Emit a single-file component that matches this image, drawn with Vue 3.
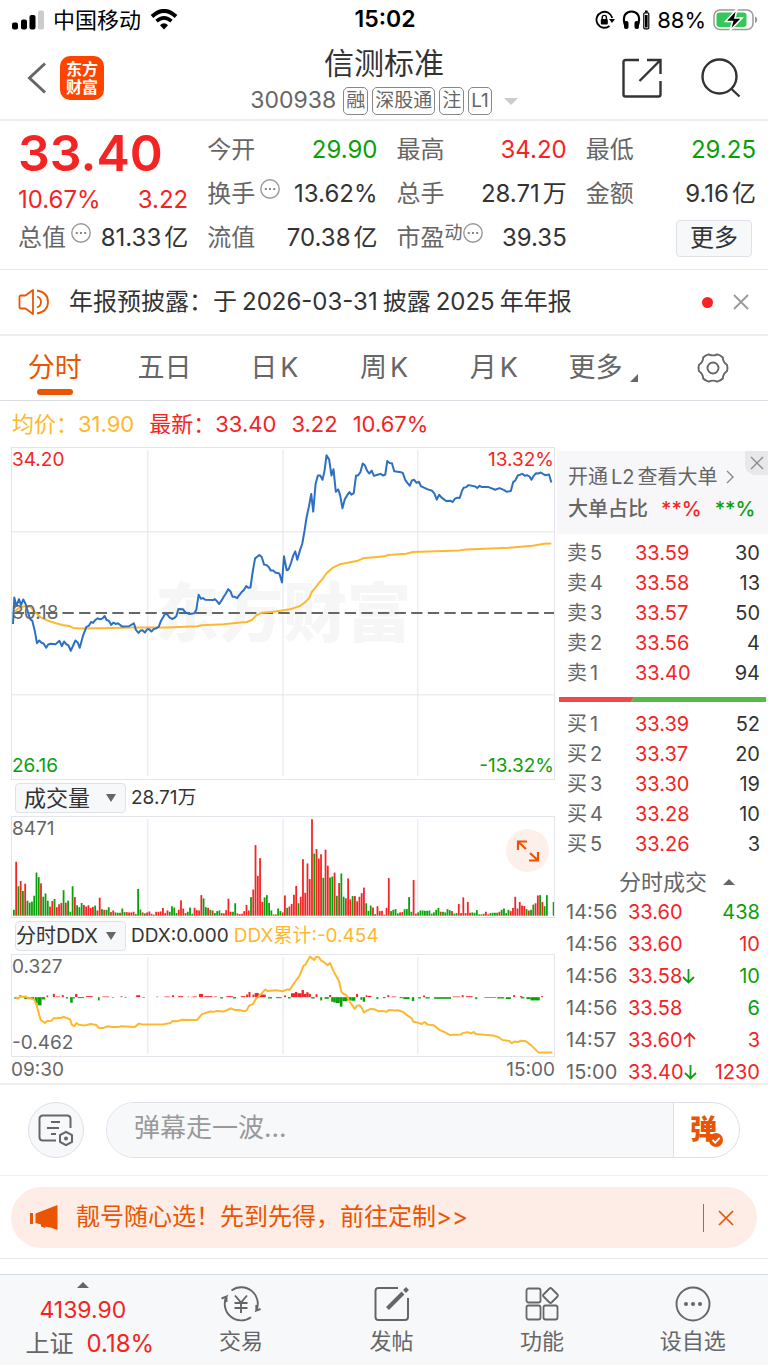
<script setup>
import { ref, computed } from 'vue'

const tabs = ['分时', '五日', '日K', '周K', '月K', '更多']
const activeTab = ref('分时')
const message = ref('')
const volumeIndex = ref('成交量')
const ddxIndex = ref('分时DDX')

const quoteColumns = [
  [
    { label: '今开', value: '29.90', tone: 'down' },
    { label: '换手', value: '13.62%', hint: true },
    { label: '流值', value: '70.38', unit: '亿' },
  ],
  [
    { label: '最高', value: '34.20', tone: 'up' },
    { label: '总手', value: '28.71', unit: '万' },
    { label: '市盈', sup: '动', value: '39.35', hint: true },
  ],
  [
    { label: '最低', value: '29.25', tone: 'down' },
    { label: '金额', value: '9.16', unit: '亿' },
  ],
]

const sells = [
  { side: '卖', level: 5, price: '33.59', volume: 30 },
  { side: '卖', level: 4, price: '33.58', volume: 13 },
  { side: '卖', level: 3, price: '33.57', volume: 50 },
  { side: '卖', level: 2, price: '33.56', volume: 4 },
  { side: '卖', level: 1, price: '33.40', volume: 94 },
]
const buys = [
  { side: '买', level: 1, price: '33.39', volume: 52 },
  { side: '买', level: 2, price: '33.37', volume: 20 },
  { side: '买', level: 3, price: '33.30', volume: 19 },
  { side: '买', level: 4, price: '33.28', volume: 10 },
  { side: '买', level: 5, price: '33.26', volume: 3 },
]
const ticks = [
  { time: '14:56', price: '33.60', arrow: '', volume: 438, tone: 'down' },
  { time: '14:56', price: '33.60', arrow: '', volume: 10, tone: 'up' },
  { time: '14:56', price: '33.58', arrow: 'down', volume: 10, tone: 'down' },
  { time: '14:56', price: '33.58', arrow: '', volume: 6, tone: 'down' },
  { time: '14:57', price: '33.60', arrow: 'up', volume: 3, tone: 'up' },
  { time: '15:00', price: '33.40', arrow: 'down', volume: 1230, tone: 'up' },
]

const priceLine =
  '36,672 40,592 46,618 54,597 60,615 67,598 74,612 82,640 88,658 94,662 102,695 108,730 115,722 122,729 128,731 136,744 142,734 150,732 164,733 176,723 183,739 190,725 196,733 203,737 210,753 224,722 231,728 237,744 247,707 257,681 264,678 271,666 277,669 284,660 291,655 298,658 305,656 312,648 318,660 325,663 332,675 338,668 345,672 352,670 365,680 385,679 400,670 406,690 414,699 420,692 426,691 433,698 440,688 446,688 453,695 460,687 468,685 475,680 481,664 488,652 494,641 500,643 508,653 515,657 522,654 528,648 534,627 548,628 555,637 568,642 582,640 588,629 595,584 602,596 608,594 615,599 640,600 643,597 650,603 657,612 664,601 671,589 677,580 684,567 691,574 697,590 704,590 711,594 718,584 725,575 731,570 738,558 745,563 751,562 758,513 765,474 778,464 785,470 792,493 799,494 806,500 812,511 819,511 826,517 838,520 846,547 852,468 860,510 866,507 873,488 880,465 886,453 892,478 900,450 907,430 914,390 920,350 927,318 934,280 940,333 947,250 954,224 961,224 968,237 974,210 980,163 988,176 995,224 1001,205 1008,273 1015,266 1021,283 1028,323 1035,296 1042,284 1049,274 1055,282 1062,277 1069,224 1075,224 1082,214 1089,188 1096,194 1102,209 1109,218 1116,209 1123,225 1136,221 1143,219 1150,224 1157,221 1163,180 1170,186 1177,187 1184,211 1204,214 1210,217 1217,237 1224,247 1231,255 1237,239 1244,237 1251,246 1258,243 1265,257 1285,266 1298,270 1305,279 1312,297 1319,282 1326,290 1340,301 1353,300 1360,304 1367,294 1374,291 1381,292 1388,270 1393,261 1401,259 1408,253 1428,257 1434,262 1441,255 1448,259 1468,259 1488,267 1501,262 1515,268 1522,273 1535,271 1542,244 1549,238 1556,224 1570,219 1577,225 1584,223 1591,227 1597,237 1604,225 1611,217 1618,218 1625,215 1638,223 1650,221 1657,245'
const averageLine =
  '36,640 48,628 60,620 80,618 90,622 105,640 120,652 140,662 165,670 185,675 205,678 217,684 240,686 300,685 400,683 500,683 590,679 605,676 670,673 720,668 740,666 755,660 768,647 785,638 820,635 870,628 900,618 915,607 928,594 935,577 960,545 970,534 980,519 998,503 1020,492 1075,481 1090,474 1155,468 1165,464 1220,460 1240,455 1380,450 1400,447 1530,442 1600,436 1635,430 1657,429'
const ddxLine =
  '43,652 52,655 58,649 66,650 76,649 80,654 88,654 95,657 101,660 107,675 113,698 119,720 132,730 139,724 152,723 159,715 166,716 173,714 180,715 187,711 195,714 203,717 208,719 213,735 220,740 227,730 234,735 250,738 270,733 287,736 294,745 308,745 322,740 335,742 355,742 362,740 403,742 415,732 430,735 490,734 510,730 517,724 530,725 545,720 590,721 605,703 630,695 640,696 650,693 670,695 693,685 703,690 715,690 735,694 740,690 748,676 758,673 768,655 775,650 795,628 802,632 828,630 848,633 862,627 869,629 880,612 890,597 897,589 903,575 910,556 917,551 930,527 943,537 950,527 957,529 964,539 970,542 983,553 991,547 1000,569 1018,603 1025,635 1032,641 1040,645 1050,665 1065,687 1072,677 1080,676 1087,685 1093,698 1100,693 1113,687 1125,688 1135,694 1150,693 1160,696 1168,690 1185,692 1195,691 1210,696 1225,708 1235,714 1242,726 1255,729 1267,733 1275,727 1285,735 1303,737 1320,751 1337,759 1352,767 1385,765 1390,761 1405,758 1415,762 1423,758 1430,764 1480,768 1497,773 1510,782 1530,785 1538,792 1545,787 1558,788 1565,784 1580,786 1595,797 1618,820 1660,820'

// one bar per minute, negative numbers are falling minutes
const morning = [
  -18, 165, -90, 106, -76, 98, -46, -40, -43, -61, -132, -118, 99, -58, -68, -46, 28, 45, -51, 26,
  35, 39, -78, 40, -46, -12, -90, 57, -32, -26, -39, 33, 28, 32, 24, 27, -31, 16, 55, -20,
  18, -18, -26, 11, 16, -10, -9, 9, -22, -11, 11, 10, 10, 12, -5, -82, -19, 10, -7, 10,
  13, 6, -3, 12, 12, 13, 24, 8, 16, -12, -29, -25, -8, 18, 47, 22, 8, -12, -25, -6,
  24, 17, 16, 63, -53, -26, 24, -18, 16, -8, -14, -16, 8, 7, 17, 52, 12, -12, -38, 7,
  5, 6, 14, 33, 16, -57, 80, 216, 122, 176, 42, -56, -63, -39, -16, 4, -4, -22, -14, 10,
]
const afternoon = [
  62, -24, 28, 36, 64, 91, -38, 58, 173, 70, 160, 112, 295, -190, 204, 175, 188, -116, 202, 153,
  -117, -120, 132, -61, 100, -129, -58, 53, 114, 50, -60, 60, 44, 58, 69, 86, -38, -15, -31, 25,
  -5, 29, 14, 15, -3, 24, 115, -14, -18, -20, -7, 10, 11, -20, -20, -57, -12, 109, 6, -10,
  -16, -16, -15, -15, -16, -6, -10, -18, -24, 12, -12, -10, -20, -17, 14, -6, -8, 36, 8, 56,
  8, 42, 9, -10, -9, -17, -4, -4, 6, 12, 4, -8, -9, -9, -9, 12, -18, -22, -8, -18,
  14, 24, 58, 22, 42, 31, 30, -20, 16, -18, -34, 38, 62, -63, 42, -29, -63, 0, 0, -42,
]

const volumeBars = computed(() => {
  const build = (list, start) => list.map((v, i) => ({
    x: start + i * 6.8,
    height: Math.abs(v),
    tone: v > 0 ? 'up' : 'down',
  }))
  return [...build(morning, 36), ...build(afternoon, 852)]
})

// [start, end, height]
const ddxBars = [
  [40, 52, -5], [55, 61, 6], [61, 70, 2], [70, 100, -6], [102, 110, -18], [110, 122, -25], [122, 133, -7],
  [137, 142, 5], [156, 162, 10], [165, 178, 2], [183, 189, 6], [195, 202, -4], [208, 216, -17],
  [216, 222, -4], [223, 230, 10], [232, 250, -3], [256, 276, 3], [292, 297, -10], [305, 325, 2],
  [335, 340, -2], [360, 365, 3], [372, 378, -2], [407, 419, 6], [426, 433, -2], [468, 473, 2],
  [492, 508, 2], [515, 521, 6], [533, 548, 3], [562, 566, 2], [576, 590, 2], [596, 608, 10],
  [612, 636, 3], [642, 650, 2], [660, 668, -4], [678, 698, 3], [698, 708, -4], [722, 736, 3],
  [738, 744, 8], [745, 751, 16], [757, 763, 8], [764, 776, 13], [777, 797, 8], [804, 816, -4], [828, 845, -3],
  [852, 858, 5], [864, 872, -4], [873, 885, 12], [885, 892, 16], [892, 905, 12], [905, 912, 22],
  [912, 919, 10], [919, 926, 15], [926, 933, 10], [934, 945, -4], [947, 953, 9], [961, 967, -10],
  [974, 987, -5], [988, 994, 7], [994, 1000, -14], [1000, 1008, -16], [1008, 1020, -18], [1020, 1028, -29],
  [1028, 1042, -12], [1042, 1055, -10], [1055, 1067, -11], [1069, 1075, 10], [1082, 1088, -8],
  [1089, 1096, -14], [1098, 1103, 6], [1104, 1115, 4], [1130, 1136, -6], [1150, 1158, -3], [1163, 1169, 6],
  [1176, 1190, 2], [1200, 1210, -3], [1211, 1230, -6], [1237, 1244, -12], [1256, 1264, -4],
  [1271, 1277, 5], [1278, 1291, -4], [1304, 1355, -5], [1360, 1382, 2], [1387, 1393, 6], [1400, 1420, 3],
  [1428, 1434, -6], [1455, 1490, -2], [1494, 1515, -4], [1520, 1535, -6], [1542, 1548, 6],
  [1562, 1570, 3], [1565, 1576, -4], [1582, 1594, -6], [1594, 1622, -10], [1626, 1632, 3],
]
</script>

<template>
  <div class="app">
    <div class="status">
      <div class="status-side">
        <svg class="signal" viewBox="0 0 32 20" aria-hidden="true">
          <rect x="0" y="12.500" width="6" height="7" rx="2" />
          <rect x="9" y="9.500" width="6" height="10" rx="2" />
          <rect x="17.500" y="5" width="6" height="14.500" rx="2" />
          <rect x="26" y="0.500" width="6" height="19" rx="2" fill="#ccc" />
        </svg>
        <span>中国移动</span>
        <svg class="wifi" viewBox="0 0 28 21" aria-hidden="true">
          <path d="M2 7.500Q14-3.500 26 7.500" fill="none" stroke="#000" stroke-width="4" />
          <path d="M6.500 12.200Q14 5.500 21.500 12.200" fill="none" stroke="#000" stroke-width="3.600" />
          <path d="M10 16.300Q14 12.300 18 16.300L14 20.500Z" />
        </svg>
      </div>
      <strong class="clock">15:02</strong>
      <div class="status-side right">
        <svg class="lock" viewBox="0 0 20 20" aria-hidden="true">
          <path d="M14.500 16A8 8 0 1 1 17.300 8" fill="none" stroke="#000" stroke-width="1.800" />
          <path d="M14 9H20L17 13Z" />
          <rect x="5.800" y="9" width="7" height="5.500" rx="1" />
          <path d="M7.200 9V7.500a2.100 2.100 0 0 1 4.200 0V9" fill="none" stroke="#000" stroke-width="1.400" />
        </svg>
        <svg class="headphone" viewBox="0 0 28 20" aria-hidden="true">
          <path d="M3.500 16.500C-1 5 5 1.500 9.500 1.500S20 5 15.500 16.500" fill="none" stroke="#000" stroke-width="2.200" />
          <rect x="2" y="11" width="4.500" height="8" rx="2" />
          <rect x="12.500" y="11" width="4.500" height="8" rx="2" />
          <rect x="21.800" y="2.800" width="5" height="16" rx="1" fill="none" stroke="#000" stroke-width="1.200" />
          <rect x="23" y="5" width="2.600" height="12.500" />
          <rect x="23" y="0.500" width="2.600" height="2" />
        </svg>
        <span>88%</span>
        <svg class="battery" viewBox="0 0 45 22" aria-hidden="true">
          <rect x="1" y="1" width="39" height="19.500" rx="6" fill="none" stroke="#999" stroke-width="1.500" />
          <rect x="3.500" y="3.500" width="30" height="14.500" rx="3" fill="#35c759" />
          <path d="M42 7.500c3 1 3 5.500 0 6.500Z" fill="#999" />
          <path d="M24 0L12.500 12.500H19.500L17 21.500L29 9H22Z" stroke="#fff" stroke-width="1.600" />
        </svg>
      </div>
    </div>

    <header class="header">
      <div class="header-left">
        <button class="plain" aria-label="返回">
          <svg class="back" viewBox="0 0 20 32"><path d="M18 1.500L2.500 16L18 30.500" fill="none" stroke="#666" stroke-width="3" /></svg>
        </button>
        <a href="#" class="brand">东方<br />财富</a>
      </div>
      <div class="header-mid">
        <h1>信测标准</h1>
        <div class="code-row">
          <span class="code">300938</span>
          <span class="tag">融</span>
          <span class="tag">深股通</span>
          <span class="tag">注</span>
          <span class="tag">L1</span>
          <i class="caret"></i>
        </div>
      </div>
      <div class="header-right">
        <button class="plain" aria-label="分享">
          <svg class="share" viewBox="0 0 40 40" fill="none" stroke="#333" stroke-width="2.400">
            <path d="M17 2H3.500Q1.500 2 1.500 4V36.500Q1.500 38.500 3.500 38.500H36.500Q38.500 38.500 38.500 36.500V23" />
            <path d="M25 2H38.500V16M38 2.500L17.500 23" />
          </svg>
        </button>
        <button class="plain" aria-label="搜索">
          <svg class="search" viewBox="0 0 40 40" fill="none" stroke="#333" stroke-width="2.400">
            <circle cx="18.500" cy="18.500" r="17" /><path d="M30 30.500L38.500 38.500" />
          </svg>
        </button>
      </div>
    </header>

    <section class="quote">
      <div class="quote-main">
        <div class="last">33.40</div>
        <div class="pair up"><span>10.67%</span><span>3.22</span></div>
        <div class="pair">
          <span class="label">总值
            <svg class="hint" viewBox="0 0 20 20"><circle cx="10" cy="10" r="9.200" fill="none" stroke="#999" stroke-width="1.400" /><path d="M4.800 10h2M9 10h2M13.200 10h2" stroke="#888" stroke-width="2" /></svg>
          </span>
          <span class="with-unit">81.33<em>亿</em></span>
        </div>
      </div>
      <div v-for="(column, i) in quoteColumns" :key="i" class="quote-col">
        <div v-for="item in column" :key="item.label" class="pair">
          <span class="label">{{ item.label }}<sup v-if="item.sup">{{ item.sup }}</sup>
            <svg v-if="item.hint" class="hint" viewBox="0 0 20 20"><circle cx="10" cy="10" r="9.200" fill="none" stroke="#999" stroke-width="1.400" /><path d="M4.800 10h2M9 10h2M13.200 10h2" stroke="#888" stroke-width="2" /></svg>
          </span>
          <span class="with-unit" :class="item.tone">{{ item.value }}<em v-if="item.unit">{{ item.unit }}</em></span>
        </div>
        <div v-if="column.length < 3" class="pair more-cell"><button class="more">更多</button></div>
      </div>
    </section>

    <section class="notice">
      <svg class="speaker" viewBox="0 0 32 28" fill="none" stroke="#ea5504" stroke-width="1.800">
        <path d="M15 2V26L7.500 20.500H3Q1.500 20.500 1.500 19V9Q1.500 7.500 3 7.500H7.500Z" stroke-linejoin="round" />
        <path d="M19 8.500Q23 10 23 14T19 19.500M19 2.500Q30 4.500 30 14T19 25.500" />
      </svg>
      <a href="#">年报预披露：于<b>2026-03-31</b>披露<b>2025</b>年年报</a>
      <i class="dot"></i>
      <button class="plain" aria-label="关闭">
        <svg class="close-sm" viewBox="0 0 16 16"><path d="M1 1L15 15M15 1L1 15" stroke="#999" stroke-width="1.800" /></svg>
      </button>
    </section>

    <nav class="tabs">
      <button v-for="tab in tabs" :key="tab" class="tab" :class="{ active: tab === activeTab }" @click="activeTab = tab">
        {{ tab.replace('K', '') }}<b v-if="tab.endsWith('K')">K</b><i v-if="tab === '更多'" class="corner"></i>
      </button>
      <button class="tab" aria-label="设置">
        <svg class="gear" viewBox="0 0 32 32" fill="none" stroke="#666" stroke-width="1.900">
          <path d="M29.900 12.800Q31 16 29.900 19.200Q26 21.800 25.800 26.500Q23.500 28.900 20.200 29.700Q16 27.500 11.800 29.700Q8.500 28.900 6.200 26.500Q6 21.800 2.100 19.200Q1 16 2.100 12.800Q6 10.200 6.200 5.500Q8.500 3.100 11.800 2.300Q16 4.500 20.200 2.300Q23.500 3.100 25.800 5.500Q26 10.200 29.900 12.800Z" />
          <circle cx="16" cy="16" r="5.500" />
        </svg>
      </button>
    </nav>

    <div class="legend">
      <span class="avg">均价：31.90</span>
      <span class="up">最新：33.40</span>
      <span class="up">3.22</span>
      <span class="up">10.67%</span>
    </div>

    <main class="board">
      <div class="charts">
        <div class="panel price-panel">
          <span class="watermark">东方财富</span>
          <svg viewBox="33 141 1632 999" preserveAspectRatio="none">
            <path class="grid" d="M442 147V1132M849 147V1132M1255 147V1132M33 394H1665M33 886H1665" />
            <path class="base" d="M35 639H1665" />
            <polyline class="line gold" :points="averageLine" />
            <polyline class="line blue" :points="priceLine" />
          </svg>
          <span class="mark at-top at-left up">34.20</span>
          <span class="mark at-top at-right up">13.32%</span>
          <span class="mark at-mid at-left">30.18</span>
          <span class="mark at-bottom at-left down">26.16</span>
          <span class="mark at-bottom at-right down">-13.32%</span>
        </div>

        <div class="panel-head">
          <label class="picker">
            <select v-model="volumeIndex" aria-label="成交量指标"><option>成交量</option></select>
          </label>
          <span>28.71万</span>
        </div>
        <div class="panel volume-panel">
          <svg viewBox="33 108 1632 306" preserveAspectRatio="none">
            <path class="grid" d="M442 114V411M849 114V411M1255 114V411" />
            <rect v-for="(bar, i) in volumeBars" :key="i" :class="bar.tone" :x="bar.x" :y="410 - bar.height" width="5.400" :height="bar.height" />
          </svg>
          <span class="mark at-top at-left">8471</span>
          <button class="expand" aria-label="全屏">
            <svg viewBox="0 0 24 24" fill="none" stroke="#ea5504" stroke-width="2.200">
              <path d="M2 11V2.500H11M2.500 3L10 10M22 13V21.500H13M21.500 21L14 14" />
            </svg>
          </button>
        </div>

        <div class="panel-head">
          <label class="picker tight">
            <select v-model="ddxIndex" aria-label="资金指标"><option>分时DDX</option></select>
          </label>
          <span>DDX:0.000</span>
          <span class="avg">DDX累计:-0.454</span>
        </div>
        <div class="panel ddx-panel">
          <svg viewBox="33 522 1632 309" preserveAspectRatio="none">
            <path class="grid" d="M442 528V825M849 528V825M1255 528V825" />
            <rect v-for="(bar, i) in ddxBars" :key="i" :class="bar[2] > 0 ? 'up' : 'down'" :x="bar[0]" :y="bar[2] > 0 ? 651 - bar[2] : 651" :width="bar[1] - bar[0]" :height="Math.abs(bar[2])" />
            <polyline class="line gold" :points="ddxLine" />
          </svg>
          <span class="mark at-top at-left">0.327</span>
          <span class="mark at-bottom at-left">-0.462</span>
        </div>
        <div class="axis"><span>09:30</span><span>15:00</span></div>
      </div>

      <aside class="book">
        <div class="promo">
          <a href="#">开通<b>L2</b>查看大单<svg class="chevron" viewBox="0 0 8 14"><path d="M1 1L7 7L1 13" fill="none" stroke="#888" stroke-width="1.400" /></svg></a>
          <div class="ratio"><strong>大单占比</strong><span class="up">**%</span><span class="down">**%</span></div>
          <button class="promo-close" aria-label="关闭">
            <svg viewBox="0 0 14 14"><path d="M1 1L13 13M13 1L1 13" stroke="#888" stroke-width="1.300" /></svg>
          </button>
        </div>
        <table class="levels">
          <tbody>
            <tr v-for="row in sells" :key="row.level">
              <th scope="row">{{ row.side }}<b>{{ row.level }}</b></th>
              <td class="up">{{ row.price }}</td>
              <td class="amount">{{ row.volume }}</td>
            </tr>
          </tbody>
        </table>
        <svg class="balance" viewBox="0 0 207 5" preserveAspectRatio="none">
          <path d="M0 0H75L72 5H0Z" fill="#ee4a4a" /><path d="M75 0H207V5H72Z" fill="#57b946" />
        </svg>
        <table class="levels">
          <tbody>
            <tr v-for="row in buys" :key="row.level">
              <th scope="row">{{ row.side }}<b>{{ row.level }}</b></th>
              <td class="up">{{ row.price }}</td>
              <td class="amount">{{ row.volume }}</td>
            </tr>
          </tbody>
        </table>
        <button class="tick-title">分时成交<i class="caret-up"></i></button>
        <table class="ticks">
          <tbody>
            <tr v-for="(tick, i) in ticks" :key="i">
              <td class="time">{{ tick.time }}</td>
              <td class="up">
                <span class="tick-price">{{ tick.price }}<svg v-if="tick.arrow" class="arrow" :class="tick.arrow" viewBox="0 0 13 16" fill="none" stroke-width="1.800">
                  <path v-if="tick.arrow === 'down'" d="M6.500 1V14.500M1 9L6.500 14.500L12 9" />
                  <path v-else d="M6.500 15V1.500M1 7L6.500 1.500L12 7" />
                </svg></span>
              </td>
              <td class="amount" :class="tick.tone">{{ tick.volume }}</td>
            </tr>
          </tbody>
        </table>
      </aside>
    </main>

    <section class="comment">
      <button class="round" aria-label="弹幕设置">
        <svg viewBox="0 0 36 32" fill="none" stroke="#666" stroke-width="2">
          <path d="M32.500 14V5Q32.500 1.500 29 1.500H5Q1.500 1.500 1.500 5V23Q1.500 26.500 5 26.500H18" />
          <path d="M13 8H22M9 14H21M13 20H18" />
          <path d="M28 17.800L34 21.200V27.800L28 31.200L22 27.800V21.200Z" />
          <circle cx="28" cy="24.500" r="1" />
        </svg>
      </button>
      <div class="comment-box">
        <input v-model="message" type="text" placeholder="弹幕走一波..." aria-label="弹幕" />
        <button class="toggle" aria-label="弹幕开关">
          <span>弹</span>
          <svg viewBox="0 0 14 14"><circle cx="7" cy="7" r="7" fill="#ea5504" /><path d="M3.500 7L6.200 9.600L10.700 4.800" fill="none" stroke="#fff" stroke-width="1.800" /></svg>
        </button>
      </div>
    </section>

    <section class="promotion">
      <div class="pill">
        <svg class="horn" viewBox="0 0 28 25" fill="#ea5504">
          <path d="M0 8H3V19H0ZM5.500 8.500L27.500 0V25L20.500 22.500L19 22.500L15.500 21.500V23L11 21.500V19.500L5.500 18Z" />
        </svg>
        <a href="#">靓号随心选！先到先得，前往定制&gt;&gt;</a>
        <button class="plain" aria-label="关闭">
          <svg class="close-md" viewBox="0 0 16 16"><path d="M1 1L15 15M15 1L1 15" stroke="#ea5504" stroke-width="1.700" /></svg>
        </button>
      </div>
    </section>

    <nav class="toolbar">
      <a href="#" class="index">
        <i class="caret-up"></i>
        <span class="up">4139.90</span>
        <span class="index-row">上证<b class="up">0.18%</b></span>
      </a>
      <a href="#" class="item">
        <svg viewBox="0 0 40 36" fill="none" stroke="#666" stroke-width="1.900">
          <path d="M10.500 4.400A16.500 16.500 0 0 1 35.300 24.500L39.500 23M35.300 24.500V19M0.500 12.500L5.500 10.500A16.500 16.500 0 0 0 30 31.200M5.500 10.500V16" />
          <path d="M14 9.500L20 16.500L26 9.500M20 16.500V27M13.500 17H26.500M13.500 22H26.500" />
        </svg>
        交易
      </a>
      <a href="#" class="item">
        <svg viewBox="0 0 40 36" fill="none" stroke="#666" stroke-width="2">
          <path d="M26 2H6.500Q3.500 2 3.500 5V31Q3.500 34 6.500 34H33Q36 34 36 31V12" />
          <path d="M15.500 22.500L31 7" stroke-width="4" /><path d="M32.500 5.500L35.500 2.500" stroke-width="4" />
        </svg>
        发帖
      </a>
      <a href="#" class="item">
        <svg viewBox="0 0 40 36" fill="none" stroke="#666" stroke-width="1.800">
          <rect x="4.500" y="2.500" width="14" height="14" rx="2" /><rect x="4.500" y="19.500" width="14" height="14" rx="2" />
          <rect x="21.500" y="19.500" width="14" height="14" rx="2" />
          <path d="M27.500 2.500L21.500 8.500Q20.500 9.500 21.500 10.500L27.500 16.500Q28.500 17.500 29.500 16.500L35.500 10.500Q36.500 9.500 35.500 8.500L29.500 2.500Q28.500 1.500 27.500 2.500Z" />
        </svg>
        功能
      </a>
      <a href="#" class="item">
        <svg viewBox="0 0 40 36" fill="none" stroke="#666" stroke-width="1.900">
          <circle cx="20" cy="18" r="16.500" />
          <g fill="#666" stroke="none"><circle cx="13" cy="18" r="2" /><circle cx="20" cy="18" r="2" /><circle cx="27" cy="18" r="2" /></g>
        </svg>
        设自选
      </a>
    </nav>
  </div>
</template>

<style>
body {
  margin: 0;
  background: #fff;
}
</style>

<style scoped>
.app {
  font-family: Inter, 'Noto Sans CJK SC', sans-serif;
  font-size: 24px;
  line-height: 1.2;
  color: #333;
  background: #fff;
}

.app * {
  box-sizing: border-box;
}

svg {
  display: block;
  flex: none;
}

button,
input,
select {
  font: inherit;
  color: inherit;
  border: 0;
  padding: 0;
  margin: 0;
  background: none;
}

a {
  color: inherit;
  text-decoration: none;
}

b {
  font-weight: 400;
  margin: 0 3px;
}

em,
i {
  font-style: normal;
}

.plain {
  display: flex;
}

.up {
  color: #f52424;
  fill: #f52424;
}

.down {
  color: #0aa00a;
  fill: #0aa00a;
}

.avg {
  color: #fdb82f;
}

/* status bar */
.status {
  display: flex;
  align-items: center;
  height: 40px;
  padding: 0 10px 0 12px;
  font-size: 22px;
  color: #000;
}

.status-side {
  display: flex;
  flex: 1;
  align-items: center;
  gap: 9px;
}

.status-side.right {
  justify-content: flex-end;
  gap: 7px;
}

.clock {
  font-size: 23px;
  font-weight: 600;
}

.signal {
  width: 32px;
  height: 20px;
}

.wifi {
  width: 28px;
  height: 21px;
}

.lock {
  width: 20px;
  height: 20px;
}

.headphone {
  width: 28px;
  height: 20px;
}

.battery {
  width: 45px;
  height: 22px;
}

/* header */
.header {
  display: flex;
  height: 81px;
  border-bottom: 2px solid #eee;
}

.header-left,
.header-right {
  display: flex;
  flex: 1;
  align-items: center;
  padding: 0 27px 4px;
  gap: 13px;
}

.header-right {
  justify-content: flex-end;
  gap: 39px;
}

.back {
  width: 20px;
  height: 32px;
}

.brand {
  width: 44px;
  height: 44px;
  padding-top: 4px;
  border-radius: 10px;
  background: #ff4400;
  color: #fff;
  font-size: 16px;
  font-weight: 700;
  line-height: 18px;
  text-align: center;
}

.header-mid {
  display: flex;
  flex-direction: column;
  align-items: center;
}

h1 {
  margin: 0;
  font-size: 30px;
  font-weight: 400;
  line-height: 46px;
}

.code-row {
  display: flex;
  align-items: center;
  gap: 4px;
  height: 30px;
  font-size: 19px;
  color: #666;
}

.code {
  font-size: 23px;
  margin-right: 3px;
}

.tag {
  height: 28px;
  padding: 0 2px;
  border: 1px solid #888;
  border-radius: 5px;
  line-height: 26px;
}

.caret {
  margin-left: 8px;
  border: 7px solid transparent;
  border-top-color: #ccc;
  border-bottom: 0;
}

.share,
.search {
  width: 40px;
  height: 40px;
}

/* quote */
.quote {
  display: grid;
  grid-template-columns: repeat(4, 1fr);
  column-gap: 19px;
  height: 149px;
  padding: 4px 12px 0 18px;
  border-bottom: 1px solid #e6e6e6;
}

.last {
  height: 56px;
  line-height: 56px;
  font-size: 50px;
  font-weight: 600;
  color: #f52424;
}

.pair {
  display: flex;
  align-items: center;
  justify-content: space-between;
  height: 38px;
  white-space: nowrap;
}

.quote-col {
  padding-top: 3px;
}

.quote-col .pair {
  height: 44px;
}

.label {
  display: flex;
  align-items: center;
  color: #666;
}

.label sup {
  align-self: flex-start;
  font-size: 18px;
  line-height: 20px;
}

.hint {
  width: 20px;
  height: 20px;
  margin: 0 0 10px 5px;
}

sup + .hint {
  margin-left: 0;
}

.with-unit em {
  margin-left: 3px;
}

.quote-col .more-cell {
  justify-content: flex-end;
  padding-right: 4px;
}

.more {
  width: 76px;
  height: 37px;
  border: 1px solid #dfe2e8;
  border-radius: 4px;
  background: #f7f8fa;
}

/* notice */
.notice {
  display: flex;
  align-items: center;
  height: 66px;
  padding: 0 19px 0 18px;
  border-bottom: 2px solid #eee;
}

.notice a {
  flex: 1;
  margin-left: 19px;
}

.notice b {
  margin: 0 5px;
}

.speaker {
  width: 32px;
  height: 28px;
}

.dot {
  width: 11px;
  height: 11px;
  margin-right: 20px;
  border-radius: 50%;
  background: #f52424;
}

.close-sm,
.close-md {
  width: 16px;
  height: 16px;
}

/* tabs */
.tabs {
  display: flex;
  height: 65px;
  border-bottom: 1px solid #dcdce2;
}

.tab {
  position: relative;
  display: flex;
  flex: 1;
  align-items: center;
  justify-content: center;
  font-size: 27px;
  color: #666;
}

.tab.active {
  color: #ea5504;
}

.tab.active::after {
  content: '';
  position: absolute;
  bottom: 5px;
  width: 36px;
  height: 6px;
  border-radius: 3px;
  background: #ea5504;
}

.tab b {
  margin-right: 0;
}

.corner {
  align-self: flex-end;
  margin: 0 0 18px 8px;
  border: 4px solid #666;
  border-top-color: transparent;
  border-left-color: transparent;
}

.gear {
  width: 32px;
  height: 32px;
}

.legend {
  display: flex;
  align-items: center;
  gap: 15px;
  height: 46px;
  padding-left: 12px;
  font-size: 22px;
}

/* charts */
.board {
  display: flex;
  border-bottom: 2px solid #eee;
}

.charts {
  flex: 1;
  min-width: 0;
  margin-left: 11px;
}

.panel {
  position: relative;
  border: 1px solid #e3e5ec;
}

.panel > svg {
  position: relative;
  width: 100%;
  height: 100%;
}

.price-panel {
  height: 333px;
}

.volume-panel {
  height: 102px;
}

.ddx-panel {
  height: 103px;
}

.grid,
.line {
  fill: none;
  stroke: #e3e5ec;
  stroke-width: 1px;
  vector-effect: non-scaling-stroke;
}

.base {
  fill: none;
  stroke: #666;
  stroke-width: 6px;
  stroke-dasharray: 34 16;
}

.line {
  stroke-width: 2px;
  stroke-linejoin: round;
}

.gold {
  stroke: #fdb82f;
}

.blue {
  stroke: #2b70c2;
}

.watermark {
  position: absolute;
  top: 118px;
  left: 143px;
  font-size: 64px;
  font-weight: 900;
  line-height: 94px;
  color: #f6f6f6;
}

.mark {
  position: absolute;
  font-size: 19px;
  line-height: 24px;
  color: #666;
}

.mark.up {
  color: #f52424;
}

.mark.down {
  color: #0aa00a;
}

.at-left {
  left: 0;
}

.at-right {
  right: 0;
}

.at-top {
  top: 0;
}

.at-mid {
  top: 153px;
}

.at-bottom {
  bottom: 1px;
}

.panel-head {
  display: flex;
  align-items: center;
  gap: 5px;
  height: 36px;
  padding-left: 4px;
  font-size: 19px;
  white-space: nowrap;
}

.picker {
  position: relative;
}

.picker::after {
  content: '';
  position: absolute;
  top: 11px;
  right: 10px;
  border: 5px solid transparent;
  border-top: 8px solid #666;
  border-bottom: 0;
}

.picker select {
  display: block;
  width: 111px;
  height: 30px;
  padding-left: 8px;
  border: 1px solid #dfe2e8;
  border-radius: 4px;
  background: #f7f8fa;
  font-size: 22px;
  line-height: 28px;
  appearance: none;
}

.picker.tight select {
  padding-left: 0;
  font-size: 20px;
}

.expand {
  position: absolute;
  top: 12px;
  right: 5px;
  display: grid;
  place-items: center;
  width: 43px;
  height: 43px;
  border-radius: 50%;
  background: #fdf0ea;
}

.expand svg {
  width: 24px;
  height: 24px;
}

.axis {
  display: flex;
  justify-content: space-between;
  font-size: 19px;
  line-height: 26px;
  color: #666;
}

/* order book */
.book {
  width: 213px;
  padding: 4px 0 0 2px;
}

.promo {
  position: relative;
  height: 83px;
  padding: 10px 0 0 11px;
  background: #f7f7fa;
  font-size: 20px;
  line-height: 32px;
  color: #666;
}

.promo a,
.ratio {
  display: flex;
  align-items: center;
}

.chevron {
  width: 8px;
  height: 14px;
  margin-left: 8px;
}

.ratio strong {
  font-weight: 500;
}

.ratio span {
  margin-left: 13px;
  font-weight: 500;
}

.promo-close {
  position: absolute;
  top: 0;
  right: 0;
  display: grid;
  place-items: center;
  width: 23px;
  height: 24px;
  border-bottom-left-radius: 10px;
  background: #e8e8ea;
}

.promo-close svg {
  width: 14px;
  height: 14px;
}

table {
  width: 100%;
  border-spacing: 0;
}

th,
td {
  padding: 0;
  font-weight: 400;
  text-align: left;
  white-space: nowrap;
}

.levels {
  margin-top: 4px;
  font-size: 20px;
  line-height: 30px;
}

.levels th {
  width: 78px;
  padding-left: 10px;
  color: #666;
}

.book .amount {
  padding-right: 8px;
  text-align: right;
}

.balance {
  width: 100%;
  height: 5px;
  margin: 9px 0 3px;
  padding: 0 2px;
}

.balance + .levels {
  margin-top: 7px;
}

.tick-title {
  display: flex;
  align-items: center;
  gap: 16px;
  height: 42px;
  padding: 4px 0 0 62px;
  font-size: 22px;
  color: #666;
}

.caret-up {
  border: 6px solid transparent;
  border-top: 0;
  border-bottom-color: #666;
}

.ticks {
  font-size: 20px;
  line-height: 22px;
}

.ticks tr + tr td {
  padding-top: 10px;
}

.ticks .time {
  width: 71px;
  padding-left: 9px;
  color: #666;
}

.tick-price {
  display: flex;
  align-items: center;
}

.arrow {
  width: 13px;
  height: 16px;
}

.arrow.up {
  fill: none;
  stroke: #f52424;
}

.arrow.down {
  fill: none;
  stroke: #0aa00a;
}

/* comment bar */
.comment {
  display: flex;
  gap: 22px;
  padding: 17px 28px;
  border-bottom: 1px solid #f0f0f0;
}

.round {
  display: grid;
  place-items: center;
  width: 56px;
  height: 56px;
  border: 1px solid #dfe0e8;
  border-radius: 50%;
  background: #f7f8fa;
}

.round svg {
  width: 36px;
  height: 32px;
}

.comment-box {
  display: flex;
  flex: 1;
  height: 56px;
  overflow: hidden;
  border: 1px solid #dfe0e8;
  border-radius: 28px;
}

.comment-box input {
  flex: 1;
  min-width: 0;
  padding: 0 27px 4px;
  outline: 0;
  background: #f7f8fa;
  font-size: 26px;
}

.comment-box input::placeholder {
  color: #999;
  opacity: 1;
}

.toggle {
  position: relative;
  width: 66px;
  border-left: 1px solid #dfe0e8;
  color: #ea5504;
  font-size: 27px;
  font-weight: 900;
  line-height: 52px;
  text-align: left;
  padding-left: 16px;
}

.toggle svg {
  position: absolute;
  right: 16px;
  bottom: 10px;
  width: 14px;
  height: 14px;
}

/* promotion */
.promotion {
  padding: 11px 11px 10px;
  border-bottom: 1px solid #e8e8ec;
}

.pill {
  display: flex;
  align-items: center;
  height: 61px;
  padding: 0 23px 0 19px;
  border-radius: 31px;
  background: #fdede6;
  color: #ea5504;
}

.horn {
  width: 28px;
  height: 25px;
}

.pill a {
  flex: 1;
  margin-left: 18px;
}

.pill button {
  padding: 6px 0 6px 14px;
  border-left: 1px solid #ea5504;
}

/* bottom bar */
.toolbar {
  display: flex;
  height: 91px;
  margin-top: 15px;
  border-top: 1px solid #d8dce2;
  background: #f7f8fa;
  color: #666;
}

.toolbar a {
  display: flex;
  flex-direction: column;
  align-items: center;
}

.index {
  flex: 11;
  padding-top: 7px;
  font-size: 23px;
  line-height: 33px;
}

.index .caret-up {
  margin-bottom: 6px;
}

.index-row {
  padding-left: 14px;
  font-size: 24px;
}

.index-row b {
  margin: 0 0 0 13px;
}

.item {
  flex: 10;
  padding-top: 11px;
  font-size: 22px;
  line-height: 38px;
}

.item svg {
  width: 40px;
  height: 36px;
}
</style>
